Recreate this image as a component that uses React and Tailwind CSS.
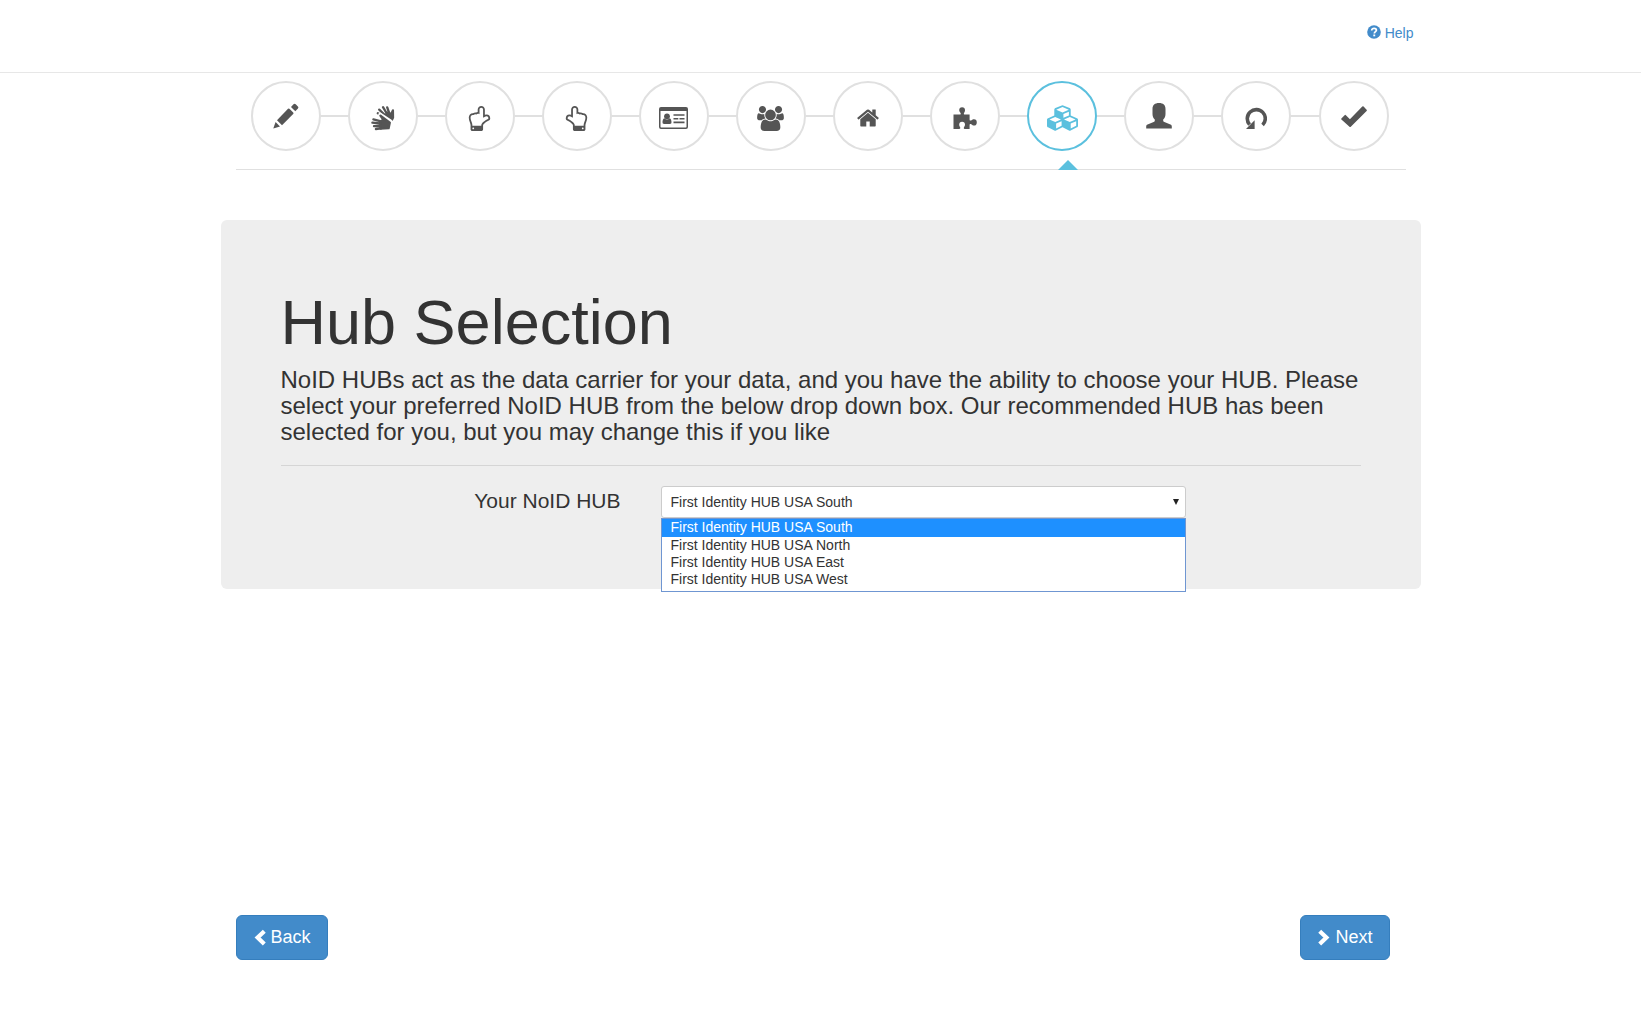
import React, { useState } from "react";

function Glyph({ box, className, children }) {
  return (
    <svg viewBox={box} className={className} fill="currentColor" aria-hidden="true">
      {children}
    </svg>
  );
}

const PencilIcon = () => (
  <Glyph box="0 0 26 26" className="size-[26px]">
    <path d="M0.3 25.5 L2.6 19 L7 23.4 Z" />
    <path d="M4 17.2 L15 5.8 A1 1 0 0 1 16.4 5.8 L20.2 9.6 A1 1 0 0 1 20.2 11 L9 22.2 Z" />
    <path d="M18 4 L20.5 1.2 A1.6 1.6 0 0 1 22.7 1.2 L24.9 3.4 A1.6 1.6 0 0 1 24.9 5.6 L22.3 8.3 Z" />
  </Glyph>
);

const HandsIcon = () => (
  <Glyph box="0 0 24 26" className="w-6 h-[26px] mt-1">
    <g stroke="currentColor" strokeWidth="2.3" strokeLinecap="round" strokeLinejoin="round">
      <path d="M16.5 12.5L8.2 4.6M17 10.5L12 2.2M18.5 9L16.2 2.4M14 12L6.8 8.2" fill="none" />
      <path d="M13 11L17 7.5L20 9.5L21.9 5.4L22 12.5L20.6 15.6Z" />
    </g>
    <path d="M9.2 9.6L19 16.2L20.6 17.6" fill="none" stroke="white" strokeWidth="4" strokeLinecap="round" />
    <g stroke="currentColor" strokeWidth="2.3" strokeLinecap="round" strokeLinejoin="round">
      <path d="M10 16.4L2.4 14.4M9 18.5L1.4 17.6M9 21L3 21.2M10 23.4L4.9 24" fill="none" />
      <path d="M9.4 10.6L12.4 14.8L9.6 16.4L9.4 23.6L17.6 23.2L18.8 17.6Z" />
    </g>
  </Glyph>
);

const HandUpIcon = ({ flip }) => (
  <Glyph box="0 0 1792 1792" className={flip ? "size-[25px] -scale-x-100 mt-1" : "size-[25px] mt-1"}>
    <path d="M1408 1600q0-26-19-45t-45-19-45 19-19 45 19 45 45 19 45-19 19-45zm128-764q0-189-167-189-26 0-56 5-16-30-52.5-47.5t-73.5-17.5-69 18q-50-53-119-53-25 0-55.5 10t-47.5 25v-331q0-52-38-90t-90-38q-51 0-89.5 39t-38.5 89v576q-20 0-48.5-15t-55-33-68-33-84.5-15q-67 0-97.5 44.5t-30.5 115.5q0 24 139 90 44 24 65 37 64 40 145 112 81 71 106 101 57 69 57 140v32h640v-32q0-72 32-167t64-193.5 32-179.5zm128-5q0 133-69 322-59 164-59 223v288q0 53-37.5 90.5t-90.5 37.5h-640q-53 0-90.5-37.5t-37.5-90.5v-288q0-10-4.5-21.5t-14-23.5-18-22.5-22.5-24-21.5-20.5-21.5-19-17-14q-74-65-129-100-21-13-62-33t-72-37-63-40.5-49.5-55-17.5-69.5q0-125 67-206.5t189-81.5q68 0 128 22v-374q0-104 76-180t179-76q105 0 181 75.5t76 180.5v169q62 4 119 37 21-3 43-3 101 0 178 60 139-1 219.5 85t80.5 227z" />
  </Glyph>
);

const IdCardIcon = () => (
  <Glyph box="0 0 29 22" className="w-[29px] h-[22px] mt-1">
    <path fillRule="evenodd" d="M2 0H27A2 2 0 0 1 29 2V20A2 2 0 0 1 27 22H2A2 2 0 0 1 0 20V2A2 2 0 0 1 2 0ZM1.5 4V19.8A0.6 0.6 0 0 0 2.1 20.4H26.9A0.6 0.6 0 0 0 27.5 19.8V4Z" />
    <circle cx="8" cy="9.3" r="2.9" />
    <path d="M5.4 11.2A3.6 3.6 0 0 0 10.6 11.2C12 11.8 12.5 13.4 12.5 15.2A1.6 1.6 0 0 1 10.9 17H5.1A1.6 1.6 0 0 1 3.5 15.2C3.5 13.4 4 11.8 5.4 11.2Z" />
    <path d="M14.5 7.2H25.5V8.8H14.5ZM14.5 10.9H19.3V12.5H14.5ZM20.5 10.9H25.5V12.5H20.5ZM14.5 14.6H25.5V16.2H14.5Z" />
  </Glyph>
);

const UsersIcon = () => (
  <Glyph box="-64 0 1920 1792" className="w-[27px] h-[25px] mt-1">
    <path d="M529 896q-162 5-265 128h-134q-82 0-138-40.5t-56-118.5q0-353 124-353 6 0 43.5 21t97.5 42.5 119 21.5q67 0 133-23-5 37-5 66 0 139 81 256zm1071 637q0 120-73 189.5t-194 69.5h-874q-121 0-194-69.5t-73-189.5q0-53 3.5-103.5t14-109 26.5-108.5 43-97.5 62-81 85.5-53.5 111.5-20q10 0 43 21.5t73 48 107 48 135 21.5 135-21.5 107-48 73-48 43-21.5q61 0 111.5 20t85.5 53.5 62 81 43 97.5 26.5 108.5 14 109 3.5 103.5zm-1024-1277q0 106-75 181t-181 75-181-75-75-181 75-181 181-75 181 75 75 181zm704 384q0 159-112.5 271.5t-271.5 112.5-271.5-112.5-112.5-271.5 112.5-271.5 271.5-112.5 271.5 112.5 112.5 271.5zm576 225q0 78-56 118.5t-138 40.5h-134q-103-123-265-128 81-117 81-256 0-29-5-66 66 23 133 23 59 0 119-21.5t97.5-42.5 43.5-21q124 0 124 353zm-128-609q0 106-75 181t-181 75-181-75-75-181 75-181 181-75 181 75 75 181z" />
  </Glyph>
);

const HomeIcon = () => (
  <Glyph box="0 0 1792 1792" className="size-6 mt-1">
    <path d="M1472 992v480q0 26-19 45t-45 19h-384v-384h-256v384h-384q-26 0-45-19t-19-45v-480q0-1 .5-3t.5-3l575-474 575 474q1 2 1 6zm223-69l-62 74q-8 9-21 11h-3q-13 0-21-7l-692-577-692 577q-12 8-24 7-13-2-21-11l-62-74q-8-10-7-23.5t11-21.5l719-599q32-26 76-26t76 26l244 204v-195q0-14 9-23t23-9h192q14 0 23 9t9 23v408l219 182q10 8 11 21.5t-7 23.5z" />
  </Glyph>
);

const PuzzleIcon = () => (
  <Glyph box="0 0 24 22" className="w-6 h-[22px] mt-1">
    <path d="M0.5 7.5H7.2C8 7.5 7.9 6.9 7.5 6.1C7 5.2 6.2 4.4 6.2 3.1A2.9 2.9 0 0 1 12 3.1C12 4.4 11.5 5.2 11.1 6.1C10.7 6.9 10.6 7.5 11.4 7.5H16.6V12.4C16.6 13.6 17.6 13.9 18.5 13.3C19.2 12.8 19.9 12.3 21 12.3A2.7 3 0 0 1 21 18.5C19.9 18.5 19.2 17.8 18.5 17.4C17.6 16.9 16.6 17 16.6 18.2V22H11.8C10.4 22 10.7 20.9 11.1 20.1C11.5 19.4 12 18.9 12 17.6A2.9 2.9 0 0 0 6.2 17.6C6.2 18.9 6.6 19.4 7 20.1C7.5 20.9 7.5 22 6.1 22H0.5Z" />
  </Glyph>
);

const CubesIcon = () => (
  <Glyph box="-128 96 2176 1792" className="w-[31px] h-[26px] mt-1">
    <path d="M512 1728l384-192v-314l-384 164v342zm-64-454l404-173-404-173-404 173zm1088 454l384-192v-314l-384 164v342zm-64-454l404-173-404-173-404 173zm-448-293l384-165v-266l-384 164v267zm-64-379l441-189-441-189-441 189zm1088 518v416q0 36-19 67t-52 47l-448 224q-25 14-57 14t-57-14l-448-224q-5-2-7-4-2 2-7 4l-448 224q-25 14-57 14t-57-14l-448-224q-33-16-52-47t-19-67v-416q0-38 21.5-70t56.5-48l434-186v-400q0-38 21.5-70t56.5-48l448-192q23-10 50-10t50 10l448 192q35 16 56.5 48t21.5 70v400l434 186q36 16 57 48t21 70z" />
  </Glyph>
);

const UserIcon = () => (
  <Glyph box="0 0 26 26" className="size-[26px]">
    <path d="M13 0C17.2 0 19.5 2 19.5 6V11C19.5 13.6 18.6 15.4 17.2 16.4V17.4C17.2 18.2 17.6 18.6 18.4 19L24.4 21.6C25.4 22 25.8 22.6 25.8 23.6V25.6H0.2V23.6C0.2 22.6 0.6 22 1.6 21.6L7.6 19C8.4 18.6 8.8 18.2 8.8 17.4V16.4C7.4 15.4 6.5 13.6 6.5 11V6C6.5 2 8.8 0 13 0Z" />
  </Glyph>
);

const RepeatIcon = () => (
  <Glyph box="0 0 22 22" className="size-[22px] mt-1">
    <path d="M4.6 17.6A9 9 0 1 1 17.6 18" fill="none" stroke="currentColor" strokeWidth="3.6" />
    <path d="M9.6 13.2V22H1Z" />
  </Glyph>
);

const OkIcon = () => (
  <Glyph box="0 0 26 22" className="w-[26px] h-[22px]">
    <path d="M0.4 13.4L3.6 10.2A0.9 0.9 0 0 1 4.9 10.2L8.9 14.2L21.3 1.6A0.9 0.9 0 0 1 22.6 1.6L25.6 4.8A0.9 0.9 0 0 1 25.6 6L9.8 21.8A0.9 0.9 0 0 1 8.5 21.8L0.4 14.6A0.9 0.9 0 0 1 0.4 13.4Z" />
  </Glyph>
);

const steps = [
  { label: "Start", icon: <PencilIcon /> },
  { label: "Hands", icon: <HandsIcon /> },
  { label: "Left hand", icon: <HandUpIcon flip /> },
  { label: "Right hand", icon: <HandUpIcon /> },
  { label: "Identity", icon: <IdCardIcon /> },
  { label: "Family", icon: <UsersIcon /> },
  { label: "Address", icon: <HomeIcon /> },
  { label: "Additional", icon: <PuzzleIcon /> },
  { label: "Hub", icon: <CubesIcon />, active: true },
  { label: "Account", icon: <UserIcon /> },
  { label: "Review", icon: <RepeatIcon /> },
  { label: "Finish", icon: <OkIcon /> },
];

const hubs = [
  "First Identity HUB USA South",
  "First Identity HUB USA North",
  "First Identity HUB USA East",
  "First Identity HUB USA West",
];

function Steps() {
  return (
    <nav aria-label="Steps" className="mx-[15px] flex items-center border-b border-[#e0e0e0] pt-2 pr-[17px] pb-[18px] pl-[15px]">
      {steps.map((step, i) => (
        <React.Fragment key={step.label}>
          {i > 0 && <span className="h-[2px] flex-1 bg-[#e0e0e0]" />}
          <span className="relative shrink-0">
            <button
              type="button"
              aria-label={step.label}
              className={
                step.active
                  ? "flex size-[70px] items-center justify-center rounded-full border-2 border-[#5bc0de] bg-white text-[#5bc0de]"
                  : "flex size-[70px] items-center justify-center rounded-full border-2 border-[#e0e0e0] bg-white text-[#555555]"
              }
            >
              {step.icon}
            </button>
            {step.active && (
              <span className="absolute top-[79px] left-[31px] border-x-10 border-b-10 border-x-transparent border-b-[#5bc0de]" />
            )}
          </span>
        </React.Fragment>
      ))}
    </nav>
  );
}

function HubSelect() {
  const [hub, setHub] = useState(hubs[0]);
  return (
    <div className="relative text-sm text-[#333333]">
      <select
        id="hub"
        value={hub}
        onChange={(e) => setHub(e.target.value)}
        className="block h-8 w-full appearance-none rounded-[3px] border border-[#cccccc] bg-white px-[9px] text-[#333333]"
      >
        {hubs.map((name) => (
          <option key={name}>{name}</option>
        ))}
      </select>
      <svg viewBox="0 0 6 6" className="pointer-events-none absolute top-[13px] right-[7px] size-[6px]" aria-hidden="true">
        <path d="M0 0H6L3 6Z" fill="#222222" />
      </svg>
      <ul role="listbox" aria-label="Your NoID HUB" className="absolute inset-x-0 top-full border border-[#6f96d2] bg-white pb-[3px]">
        {hubs.map((name) => (
          <li
            key={name}
            role="option"
            aria-selected={name === hub}
            onClick={() => setHub(name)}
            className={
              name === hub
                ? "bg-[#1e90ff] px-[9px] pb-px leading-[17px] text-white"
                : "px-[9px] leading-[17px]"
            }
          >
            {name}
          </li>
        ))}
      </ul>
    </div>
  );
}

export default function App() {
  return (
    <div className="flex min-h-screen flex-col bg-white font-['Liberation_Sans',Arial,sans-serif] text-[#333333]">
      <header className="border-b border-[#e7e7e7]">
        <div className="mx-auto flex h-[72px] max-w-[1200px] items-start justify-end px-[7px] pt-[23px]">
          <a href="#help" className="flex items-center gap-1 text-sm leading-5 text-[#428bca]">
            <svg viewBox="0 0 14 14" className="mb-[2px] size-[14px]" aria-hidden="true">
              <circle cx="7" cy="7" r="6.8" fill="currentColor" />
              <path d="M4.7 5.5C4.7 3.9 5.7 3.3 7.1 3.3C8.5 3.3 9.4 4 9.4 5.2C9.4 6.6 7.3 6.8 7.3 8.6" fill="none" stroke="white" strokeWidth="1.7" />
              <path d="M6.3 9.5H8.2V11.3H6.3Z" fill="white" />
            </svg>
            Help
          </a>
        </div>
      </header>

      <main className="mx-auto flex w-full max-w-[1200px] flex-1 flex-col">
        <Steps />

        <section className="mt-[50px] rounded-md bg-[#eeeeee] px-[60px] pt-[71px] pb-[71px]">
          <h1 className="text-[63px] leading-[63px]">Hub Selection</h1>
          <h3 className="mt-[13px] text-2xl leading-[26px]">
            NoID HUBs act as the data carrier for your data, and you have the ability to choose your HUB. Please
            select your preferred NoID HUB from the below drop down box. Our recommended HUB has been selected for
            you, but you may change this if you like
          </h3>
          <hr className="my-5 border-[#d5d5d5]" />
          <div className="grid grid-cols-[340fr_525fr_135fr] gap-x-10">
            <label htmlFor="hub" className="text-right text-[21px] leading-[30px]">
              Your NoID HUB
            </label>
            <HubSelect />
          </div>
        </section>

        <div className="mt-auto flex justify-between pr-[31px] pb-[57px] pl-[15px] text-lg leading-[23px] text-white">
          <button type="button" className="flex items-center gap-1 rounded-md border border-[#357ebd] bg-[#428bca] px-4 py-[10px]">
            <svg viewBox="0 0 14 18" className="w-[14px] h-[18px]" aria-hidden="true">
              <path d="M11.3 2.2L4.6 8.6L11.3 15" fill="none" stroke="currentColor" strokeWidth="4.2" />
            </svg>
            Back
          </button>
          <button type="button" className="flex items-center gap-1 rounded-md border border-[#357ebd] bg-[#428bca] px-4 py-[10px]">
            <svg viewBox="0 0 14 18" className="w-[14px] h-[18px]" aria-hidden="true">
              <path d="M2.7 2.2L9.4 8.6L2.7 15" fill="none" stroke="currentColor" strokeWidth="4.2" />
            </svg>
            Next
          </button>
        </div>
      </main>
    </div>
  );
}
